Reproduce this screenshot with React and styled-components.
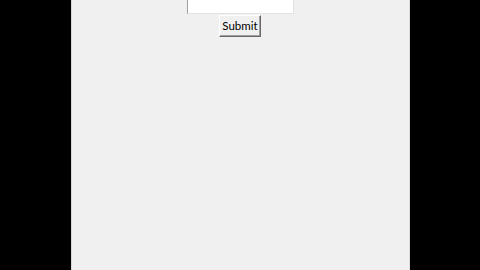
import { styled, createGlobalStyle } from 'styled-components'

const Global = createGlobalStyle`
  html, body {
    margin: 0;
    padding: 0;
    background: #000;
    height: 100%;
    overflow: hidden;
  }
  #root {
    height: 100%;
  }
`

const Screen = styled.div`
  height: 270px;
  display: flex;
  justify-content: center;
`

const Panel = styled.form`
  width: 339px;
  margin-left: 1px;
  height: 270px;
  background: #f0f0f0;
  border-left: 1px solid #d8d8d8;
  border-right: 1px solid #dcdcdc;
  display: flex;
  flex-direction: column;
  align-items: center;
  gap: 1px;
  box-sizing: border-box;
`

const Field = styled.input`
  width: 107px;
  height: 14px;
  box-sizing: border-box;
  margin: 0;
  padding: 0 2px;
  background: #fff;
  border: none;
  border-left: 1px solid #a0a0a0;
  border-right: 1px solid #e3e3e3;
  border-bottom: 1px solid #e3e3e3;
  outline: none;
  font: 12px "Lato", sans-serif;
`

const Button = styled.button`
  width: 42px;
  height: 22px;
  box-sizing: border-box;
  margin: 0 0 0 -1px;
  padding: 0 0 1px;
  background: #f0f0f0;
  border: 1px solid;
  border-color: #fff #696969 #696969 #fff;
  box-shadow: inset -1px -1px 0 #a0a0a0;
  font: 11.5px "Lato", sans-serif;
  color: #000;
  text-align: center;
`

export default function App() {
  return (
    <>
      <Global />
      <Screen>
        <Panel onSubmit={e => e.preventDefault()}>
          <Field type="text" />
          <Button type="submit">Submit</Button>
        </Panel>
      </Screen>
    </>
  )
}
